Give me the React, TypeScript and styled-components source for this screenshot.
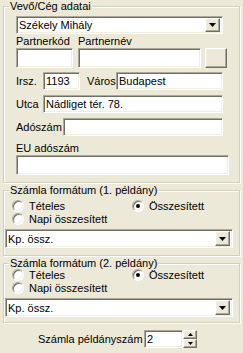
import React, { FC } from "react";
import styled, { createGlobalStyle } from "styled-components";

const GlobalStyle = createGlobalStyle`
  html, body {
    margin: 0;
    padding: 0;
    background: #ECE9D8;
  }
  body {
    font-family: "Liberation Sans", Arial, sans-serif;
    font-size: 11px;
    color: #000;
  }
`;

const Page = styled.div`
  width: 243px;
  height: 353px;
  box-sizing: border-box;
  padding: 6px 3px 0 3px;
  background: #ECE9D8;
  overflow: hidden;
`;

const GroupBox = styled.div<{ $mt?: number; $pad: string }>`
  position: relative;
  box-sizing: border-box;
  width: 237px;
  margin-top: ${(p) => p.$mt ?? 0}px;
  padding: ${(p) => p.$pad};
  border: 1px solid #D0D0BF;
  box-shadow: inset 1px 1px 0 #fff, 1px 1px 0 #fff;
`;

const Legend = styled.span`
  position: absolute;
  top: -7px;
  left: 5px;
  padding: 0 1px;
  line-height: 13px;
  background: #ECE9D8;
  white-space: nowrap;
`;

const Sunken = styled.div<{ $w: number; $h: number }>`
  box-sizing: border-box;
  width: ${(p) => p.$w}px;
  height: ${(p) => p.$h}px;
  flex: none;
  background: #fff;
  border: 1px solid;
  border-color: #ACA899 #fff #fff #ACA899;
  box-shadow: inset 1px 1px 0 #716F64, inset -1px -1px 0 #F1EFE2;
  display: flex;
  align-items: center;
  padding-left: 2px;
  white-space: nowrap;
  overflow: hidden;
`;

const RaisedButton = styled.div<{ $w: number; $h: number }>`
  box-sizing: border-box;
  width: ${(p) => p.$w}px;
  height: ${(p) => p.$h}px;
  flex: none;
  background: #ECE9D8;
  border: 1px solid;
  border-color: #fff #716F64 #716F64 #fff;
  box-shadow: inset -1px -1px 0 #ACA899, inset 1px 1px 0 #F1EFE2;
  display: flex;
  align-items: center;
  justify-content: center;
`;

const ComboText = styled.span`
  flex: 1;
  overflow: hidden;
`;

const Row = styled.div<{ $mt?: number; $gap?: number }>`
  display: flex;
  align-items: center;
  margin-top: ${(p) => p.$mt ?? 0}px;
  gap: ${(p) => p.$gap ?? 0}px;
`;

const Label = styled.span<{ $w?: number; $ml?: number }>`
  flex: none;
  width: ${(p) => (p.$w ? `${p.$w}px` : "auto")};
  margin-left: ${(p) => p.$ml ?? 0}px;
  line-height: 13px;
  white-space: nowrap;
`;

const RadioGrid = styled.div`
  display: grid;
  grid-template-columns: 120px auto;
  grid-auto-rows: 12px;
  row-gap: 1px;
  margin-left: 7px;
`;

const RadioItem = styled.label`
  display: flex;
  align-items: center;
  gap: 5px;
  line-height: 12px;
  white-space: nowrap;
`;

const RadioCircle = styled.span<{ $on?: boolean }>`
  position: relative;
  box-sizing: border-box;
  width: 12px;
  height: 12px;
  flex: none;
  border-radius: 50%;
  background: #fff;
  border: 1px solid;
  border-color: #ACA899 #fff #fff #ACA899;
  box-shadow: inset 1px 1px 0 #716F64, inset -1px -1px 0 #F1EFE2;
  &::after {
    content: "";
    display: ${(p) => (p.$on ? "block" : "none")};
    position: absolute;
    left: 3px;
    top: 3px;
    width: 4px;
    height: 4px;
    border-radius: 50%;
    background: #000;
  }
`;

const SpinButtons = styled.div`
  display: flex;
  flex-direction: column;
`;

const DownArrow: FC<{ small?: boolean }> = ({ small }) =>
  small ? (
    <svg width="5" height="3" viewBox="0 0 5 3">
      <path d="M0 0h5L2.5 3z" fill="#000" />
    </svg>
  ) : (
    <svg width="7" height="4" viewBox="0 0 7 4">
      <path d="M0 0h7L3.5 4z" fill="#000" />
    </svg>
  );

const UpArrow: FC = () => (
  <svg width="5" height="3" viewBox="0 0 5 3">
    <path d="M0 3h5L2.5 0z" fill="#000" />
  </svg>
);

const Combo: FC<{ w: number; h: number; text: string }> = ({ w, h, text }) => (
  <Sunken $w={w} $h={h} style={{ paddingRight: 2 }}>
    <ComboText>{text}</ComboText>
    <RaisedButton $w={15} $h={h - 4}>
      <DownArrow />
    </RaisedButton>
  </Sunken>
);

const Radio: FC<{ on?: boolean; label: string }> = ({ on, label }) => (
  <RadioItem>
    <RadioCircle $on={on} />
    {label}
  </RadioItem>
);

const FormatGroup: FC<{ title: string; mt: number; pad: string }> = ({ title, mt, pad }) => (
  <GroupBox $mt={mt} $pad={pad}>
    <Legend>{title}</Legend>
    <RadioGrid>
      <Radio label="Tételes" />
      <Radio on label="Összesített" />
      <Radio label="Napi összesített" />
    </RadioGrid>
    <Row $mt={4}>
      <Combo w={228} h={19} text="Kp. össz." />
    </Row>
  </GroupBox>
);

const App: FC = () => (
  <>
    <GlobalStyle />
    <Page>
      <GroupBox $pad="9px 0 7px 12px">
        <Legend>Vevő/Cég adatai</Legend>
        <Combo w={207} h={18} text="Székely Mihály" />
        <Row $mt={1}>
          <Label $w={62}>Partnerkód</Label>
          <Label>Partnernév</Label>
        </Row>
        <Row $gap={4}>
          <Sunken $w={57} $h={20} style={{ marginRight: 1 }} />
          <Sunken $w={123} $h={20} />
          <RaisedButton $w={22} $h={20} />
        </Row>
        <Row $mt={4}>
          <Label $w={27}>Irsz.</Label>
          <Sunken $w={37} $h={18}>1193</Sunken>
          <Label $w={29} $ml={7}>Város</Label>
          <Sunken $w={107} $h={18}>Budapest</Sunken>
        </Row>
        <Row $mt={5}>
          <Label $w={27}>Utca</Label>
          <Sunken $w={180} $h={18}>Nádliget tér. 78.</Sunken>
        </Row>
        <Row $mt={5}>
          <Label $w={47}>Adószám</Label>
          <Sunken $w={160} $h={18}>&nbsp;</Sunken>
        </Row>
        <Row $mt={6}>
          <Label>EU adószám</Label>
        </Row>
        <Sunken $w={213} $h={20} />
      </GroupBox>
      <FormatGroup title="Számla formátum (1. példány)" mt={7} pad="9px 0 7px 1px" />
      <FormatGroup title="Számla formátum (2. példány)" mt={7} pad="5px 0 5px 1px" />
      <Row $mt={7}>
        <Label $w={106} $ml={35}>Számla példányszám</Label>
        <Sunken $w={39} $h={18}>2</Sunken>
        <SpinButtons>
          <RaisedButton $w={14} $h={9}>
            <UpArrow />
          </RaisedButton>
          <RaisedButton $w={14} $h={9}>
            <DownArrow small />
          </RaisedButton>
        </SpinButtons>
      </Row>
    </Page>
  </>
);

export default App;
